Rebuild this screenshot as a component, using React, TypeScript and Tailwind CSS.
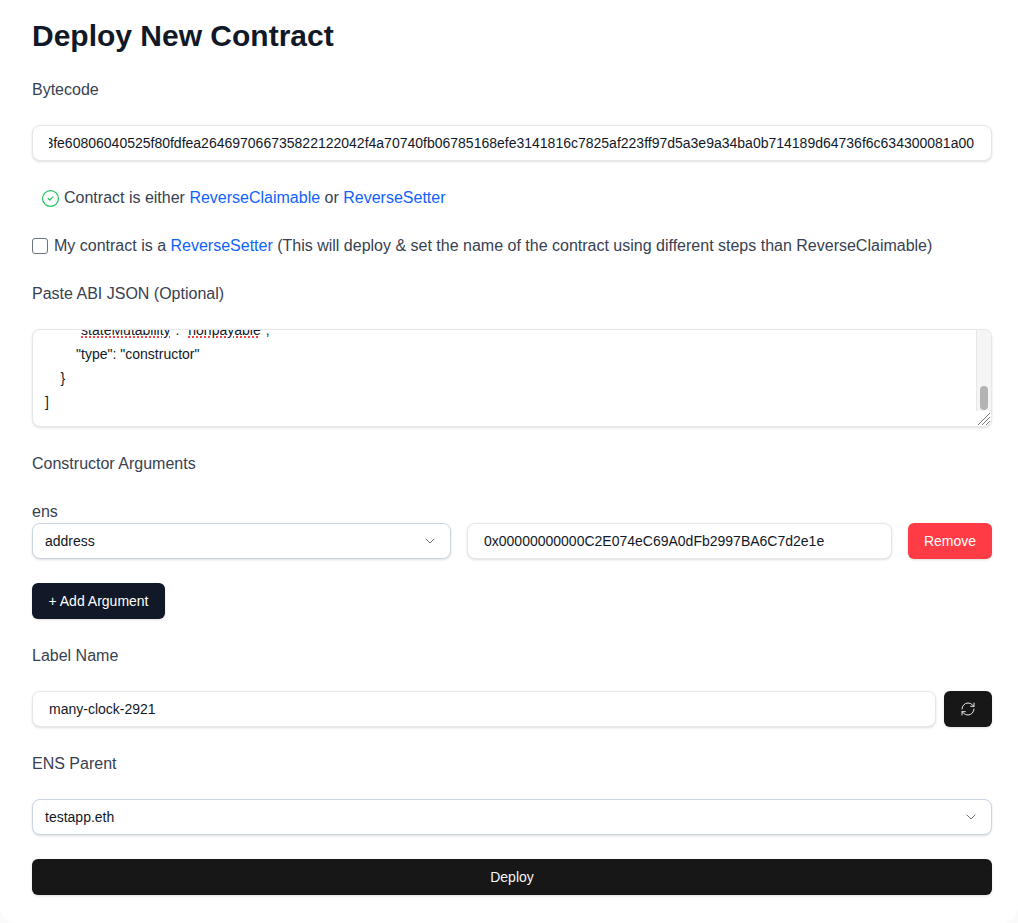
import React from 'react';
import { ChevronDown, RefreshCw, CircleCheck } from 'lucide-react';

const FieldLabel: React.FC<{ children: React.ReactNode }> = ({ children }) => (
  <div className="text-base leading-6 text-[#374151]">{children}</div>
);

const SelectBox: React.FC<{ value: string; className?: string }> = ({ value, className }) => (
  <div className={`h-9 flex items-center justify-between rounded-lg border border-[#cbd5e1] bg-white pl-3 pr-3 text-sm text-[#111827] shadow-sm ${className ?? ''}`}>
    <span>{value}</span>
    <ChevronDown className="w-4 h-4 text-[#6b7280]" strokeWidth={1.5} />
  </div>
);

const TextBox: React.FC<{ value: string; className?: string }> = ({ value, className }) => (
  <div className={`h-9 flex items-center rounded-lg border border-[#e5e7eb] bg-white px-4 text-sm text-[#111827] shadow-sm ${className ?? ''}`}>
    {value}
  </div>
);

const Link: React.FC<{ children: React.ReactNode }> = ({ children }) => (
  <a href="#" className="text-[#0f62fe]">{children}</a>
);

const Bytecode = '6080604052348015600e575f80fd5b50603e80601a5f395ff3fe60806040525f80fdfea2646970667358221220 42f4a70740fb06785168efe3141816c7825af223ff97d5a3e9a34ba0b714189d64736f6c634300081a00'.replace(' ', '');

export default function App() {
  return (
    <div className="min-h-[923px] bg-[#fafafa] font-['Liberation_Sans',Arial,sans-serif]">
      <div className="h-[923px] rounded-b-2xl bg-white pl-8 pr-[26px] pt-[18px]">
        <h1 className="text-3xl leading-9 font-bold text-[#111827]">Deploy New Contract</h1>

        <div className="mt-6">
          <FieldLabel>Bytecode</FieldLabel>
        </div>
        <div className="mt-[23px] h-9 flex items-center justify-end overflow-hidden rounded-lg border border-[#e5e7eb] bg-white px-4 text-sm text-[#111827] shadow-sm">
          <div className="overflow-hidden flex justify-end w-full">
            <span className="whitespace-nowrap pr-[1px]">{Bytecode}</span>
          </div>
        </div>

        <div className="mt-[25px] pl-[9px] flex items-center gap-1 text-base leading-6 text-[#374151]">
          <CircleCheck className="w-[19px] h-[19px] text-[#22c55e]" strokeWidth={1.6} />
          <span>Contract is either <Link>ReverseClaimable</Link> or <Link>ReverseSetter</Link></span>
        </div>

        <div className="mt-6 flex items-center gap-[6px] text-base leading-6 text-[#374151]">
          <input type="checkbox" className="appearance-none w-4 h-4 m-0 rounded-[3px] border border-[#6b7280] bg-white" />
          <span>My contract is a <Link>ReverseSetter</Link> (This will deploy &amp; set the name of the contract using different steps than ReverseClaimable)</span>
        </div>

        <div className="mt-6">
          <FieldLabel>Paste ABI JSON (Optional)</FieldLabel>
        </div>
        <div className="mt-[23px] h-[98px] relative flex overflow-hidden rounded-lg border border-[#e5e7eb] bg-white shadow-sm">
          <div className="flex-1 overflow-hidden pl-3 text-sm leading-6 text-[#111827] whitespace-pre">
            <div className="-mt-[12px]">
              <div>{'        "'}<span className="underline decoration-dotted decoration-2 decoration-[#ef4444]">stateMutability</span>{'": "'}<span className="underline decoration-dotted decoration-2 decoration-[#ef4444]">nonpayable</span>{'",'}</div>
              <div>{'        "type": "constructor"'}</div>
              <div>{'    }'}</div>
              <div>{']'}</div>
            </div>
          </div>
          <div className="w-[15px] h-[81px] flex items-end justify-center border-l border-[#e5e7eb] bg-[#f5f5f5] pb-[1px]">
            <div className="w-2 h-6 rounded-full bg-[#b3b3b3]" />
          </div>
          <svg className="absolute right-0 bottom-0 w-[15px] h-[15px]" viewBox="0 0 15 15" fill="none" stroke="#777" strokeWidth="1">
            <path d="M2 14 14 2M6 14 14 6M10 14 14 10" />
          </svg>
        </div>

        <div className="mt-[25px]">
          <FieldLabel>Constructor Arguments</FieldLabel>
        </div>
        <div className="mt-6 text-base leading-[23px] text-[#374151]">ens</div>
        <div className="flex gap-4">
          <SelectBox value="address" className="w-[419px]" />
          <TextBox value="0x00000000000C2E074eC69A0dFb2997BA6C7d2e1e" className="flex-1" />
          <button className="h-9 w-[84px] rounded-md bg-[#ff3b45] text-sm text-white shadow-sm">Remove</button>
        </div>
        <button className="mt-6 h-9 block w-[133px] rounded-md bg-[#111827] text-sm text-white shadow-sm">+ Add Argument</button>

        <div className="mt-[25px]">
          <FieldLabel>Label Name</FieldLabel>
        </div>
        <div className="mt-[23px] flex gap-2">
          <TextBox value="many-clock-2921" className="flex-1" />
          <button className="h-9 w-12 flex items-center justify-center rounded-md bg-[#171717] text-[#e5e5e5] shadow-sm">
            <RefreshCw className="w-4 h-4" strokeWidth={1.5} />
          </button>
        </div>

        <div className="mt-[25px]">
          <FieldLabel>ENS Parent</FieldLabel>
        </div>
        <SelectBox value="testapp.eth" className="mt-[23px]" />
        <button className="mt-6 h-9 block w-full rounded-md bg-[#171717] text-sm text-[#f5f5f5] shadow-sm">Deploy</button>
      </div>
    </div>
  );
}
